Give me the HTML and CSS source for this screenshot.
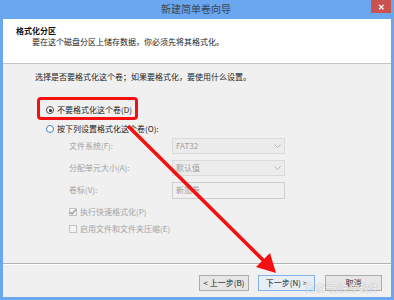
FILE: index.html
```html
<!DOCTYPE html>
<html lang="zh-CN">
<head>
    <meta charset="UTF-8">
    <title>新建简单卷向导</title>
    <link rel="stylesheet" href="styles.css">
</head>
<body>
    <div class="window">
        <div class="titlebar">
            <span></span>
            <div class="title">新建简单卷向导</div>
            <div class="close">✕</div>
        </div>

        <div class="client">
            <div class="header">
                <div class="header-title">格式化分区</div>
                <div class="header-sub">要在这个磁盘分区上储存数据，你必须先将其格式化。</div>
            </div>

            <div class="content">
                <div class="intro">选择是否要格式化这个卷；如果要格式化，要使用什么设置。</div>

                <div class="radio-row first">
                    <span class="radio checked"></span>
                    <span>不要格式化这个卷(D)</span>
                </div>
                <div class="radio-row second">
                    <span class="radio hover"></span>
                    <span>按下列设置格式化这个卷(O):</span>
                </div>

                <div class="form-row">
                    <span class="label">文件系统(F):</span>
                    <div class="field">FAT32
                        <svg class="chev" width="7" height="5" viewBox="0 0 7 5"><polyline points="0.5,0.5 3.5,3.5 6.5,0.5" fill="none" stroke="#b5b5b5" stroke-width="1"/></svg>
                    </div>
                </div>
                <div class="form-row">
                    <span class="label">分配单元大小(A):</span>
                    <div class="field">默认值
                        <svg class="chev" width="7" height="5" viewBox="0 0 7 5"><polyline points="0.5,0.5 3.5,3.5 6.5,0.5" fill="none" stroke="#b5b5b5" stroke-width="1"/></svg>
                    </div>
                </div>
                <div class="form-row">
                    <span class="label">卷标(V):</span>
                    <div class="field text">新加卷</div>
                </div>

                <div class="check-row first">
                    <span class="check">
                        <svg width="8" height="8" viewBox="0 0 8 8"><polyline points="1,4 3,6 7,1.5" fill="none" stroke="#9c9c9c" stroke-width="1.4"/></svg>
                    </span>
                    <span>执行快速格式化(P)</span>
                </div>
                <div class="check-row">
                    <span class="check"></span>
                    <span>启用文件和文件夹压缩(E)</span>
                </div>
            </div>

            <div class="footer">
                <button class="btn back">&lt; 上一步(B)</button>
                <button class="btn next">下一步(N) &gt;</button>
                <button class="btn cancel">取消</button>
            </div>
        </div>

        <!-- annotation overlay -->
        <div class="highlight"></div>
        <svg class="arrow" width="394" height="300" viewBox="0 0 394 300">
            <line x1="128" y1="126" x2="264" y2="261" stroke="#f41010" stroke-width="3.6"/>
            <polygon points="276,273 256,267 270,253" fill="#f41010"/>
        </svg>
        <div class="watermark">百家号/快学软件</div>
    </div>
</body>
</html>
```

FILE: styles.css
```css
body {
    margin: 0;
    padding: 0;
    font-family: "Noto Sans CJK SC", "Noto Sans", sans-serif;
    font-size: 8px;
    color: #1a1a1a;
}
.window {
    position: relative;
    width: 394px;
    height: 300px;
    background-color: #6ba7ef;
    display: flex;
    flex-direction: column;
    overflow: hidden;
}
.titlebar {
    height: 19px;
    display: grid;
    grid-template-columns: 1fr auto 1fr;
    align-items: start;
}
.title {
    font-size: 10px;
    line-height: 18px;
    color: #3a4452;
    margin-left: -2px;
}
.close {
    justify-self: end;
    width: 20px;
    height: 13px;
    margin-right: 3px;
    background-color: #c9524f;
    color: #fff;
    font-size: 8px;
    font-weight: bold;
    line-height: 13px;
    text-align: center;
}
.client {
    flex: 1;
    margin: 0 3px 3px 3px;
    background-color: #f0f0f0;
    display: flex;
    flex-direction: column;
}
.header {
    height: 45px;
    box-sizing: border-box;
    background-color: #fff;
    border-bottom: 1px solid #c4c4c4;
    padding: 6px 0 0 13px;
    line-height: 11px;
}
.header-title {
    font-weight: bold;
    color: #111;
}
.header-sub {
    padding-left: 16px;
    color: #222;
}
.content {
    flex: 1;
    padding-top: 7px;
    line-height: 12px;
}
.intro {
    margin-left: 32px;
    color: #222;
}
.radio-row {
    display: flex;
    align-items: center;
    gap: 3px;
    height: 14px;
    margin-left: 43px;
}
.radio-row.first {
    margin-top: 20px;
}
.radio-row.second {
    margin-top: 5px;
}
.radio {
    width: 8px;
    height: 8px;
    box-sizing: border-box;
    border: 1px solid #444;
    border-radius: 50%;
    background-color: #fff;
    position: relative;
}
.radio.checked::after {
    content: "";
    position: absolute;
    left: 1.5px;
    top: 1.5px;
    width: 3px;
    height: 3px;
    border-radius: 50%;
    background-color: #222;
}
.radio.hover {
    border-color: #3d83c8;
    background-color: #fff;
}
.form-row {
    display: flex;
    align-items: center;
    height: 16px;
    margin-left: 66px;
    margin-top: 6px;
    color: #a3a3a3;
}
.radio-row.second + .form-row {
    margin-top: 2px;
}
.label {
    width: 103px;
}
.field {
    width: 113px;
    height: 16px;
    box-sizing: border-box;
    border: 1px solid #dadada;
    background-color: #ececec;
    padding-left: 3px;
    line-height: 14px;
    color: #9f9f9f;
    display: flex;
    align-items: center;
    justify-content: space-between;
}
.field.text {
    height: 17px;
    background-color: #f0f0f0;
    border-color: #cfcfcf;
}
.chev {
    margin-right: 3px;
}
.check-row {
    display: flex;
    align-items: center;
    gap: 3px;
    height: 14px;
    margin-left: 66px;
    margin-top: 3px;
    color: #a3a3a3;
}
.check-row.first {
    margin-top: 7px;
}
.check {
    width: 8px;
    height: 8px;
    box-sizing: border-box;
    border: 1px solid #c2c2c2;
    background-color: #f4f4f4;
    display: flex;
}
.check svg {
    margin: -1px;
}
.footer {
    height: 34px;
    box-sizing: border-box;
    border-top: 1px solid #b3b3b3;
    box-shadow: inset 0 1px 0 #fdfdfd;
    display: flex;
    justify-content: flex-end;
    align-items: flex-start;
    padding: 11px 9px 0 0;
}
.btn {
    height: 16px;
    box-sizing: border-box;
    border: 1px solid #adadad;
    background-color: #e6e6e6;
    font-family: "Noto Sans CJK SC", "Noto Sans", sans-serif;
    font-size: 8px;
    color: #222;
    padding: 0;
    line-height: 14px;
}
.btn.back {
    width: 50px;
}
.btn.next {
    width: 57px;
    margin-left: 9px;
    border-color: #7fb3ea;
    background-color: #e8eef5;
}
.btn.cancel {
    width: 57px;
    margin-left: 10px;
}
.highlight {
    position: absolute;
    left: 37px;
    top: 97px;
    width: 101px;
    height: 23px;
    box-sizing: border-box;
    border: 3px solid #f41010;
    border-radius: 4px;
}
.arrow {
    position: absolute;
    left: 0;
    top: 0;
}
.watermark {
    position: absolute;
    left: 305px;
    top: 281px;
    font-size: 10px;
    line-height: 13px;
    color: rgba(255, 255, 255, 0.9);
    text-shadow: 0 0 1px rgba(90, 90, 90, 0.6);
}
```
